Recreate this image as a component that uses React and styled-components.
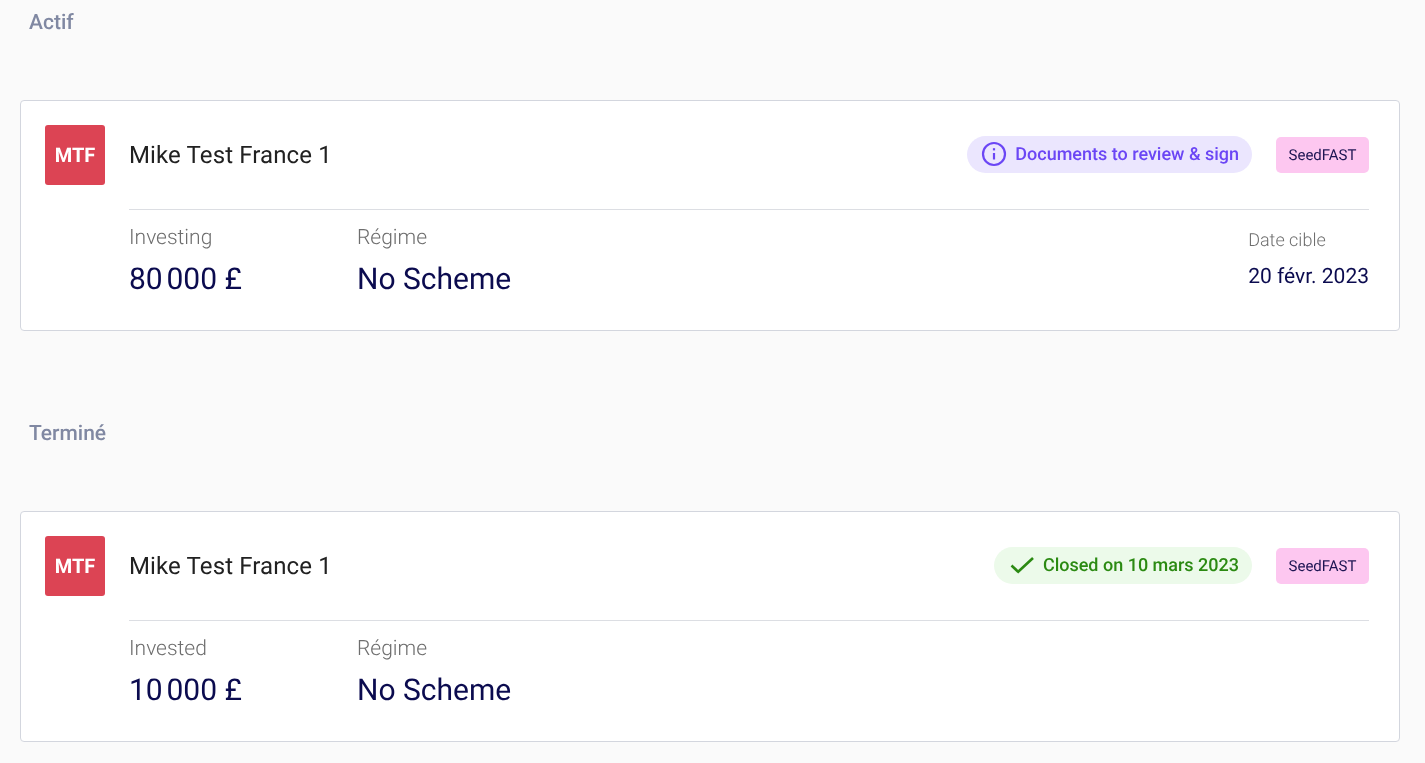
import React from 'react';
import styled, {createGlobalStyle} from 'styled-components';

const GlobalStyle = createGlobalStyle`
  html, body {
    margin: 0;
    padding: 0;
    background: #fafafa;
    font-family: Roboto, "Liberation Sans", sans-serif;
    text-rendering: geometricPrecision;
  }
`;

const Page = styled.div`
  padding: 0 25px 0 20px;
  display: flex;
  flex-direction: column;
  will-change: opacity;
`;

const SectionTitle = styled.h2`
  margin: 0 0 ${props => props.$gap}px 9px;
  padding-top: ${props => props.$top}px;
  font-size: 21px;
  line-height: 24px;
  font-weight: 500;
  color: #8088a2;
`;

const Card = styled.div`
  box-sizing: border-box;
  height: 231px;
  padding: 24px 30px 0 24px;
  background: #fff;
  border: 1px solid #d3d6de;
  border-radius: 4px;
  display: flex;
  gap: 24px;
`;

const Logo = styled.div`
  width: 60px;
  height: 60px;
  flex: none;
  background: #dc4454;
  border-radius: 3px;
  color: #fff;
  font-size: 20px;
  font-weight: 700;
  display: flex;
  align-items: center;
  justify-content: center;
`;

const Body = styled.div`
  flex: 1;
  min-width: 0;
`;

const Header = styled.div`
  height: 60px;
  padding-bottom: 24px;
  border-bottom: 1px solid #dcdee3;
  display: flex;
  align-items: center;
`;

const Name = styled.div`
  flex: 1;
  font-size: 24px;
  letter-spacing: 0.12px;
  color: #212121;
`;

const Status = styled.div`
  height: 37px;
  margin-top: -1px;
  box-sizing: border-box;
  padding: 0 13px 1px ${props => props.$pad}px;
  border-radius: 19px;
  background: ${props => props.$bg};
  color: ${props => props.$color};
  font-size: 18px;
  font-weight: 500;
  display: flex;
  align-items: center;
  gap: ${props => props.$gap}px;

  svg {
    flex: none;
  }
`;

const Chip = styled.div`
  margin-left: 24px;
  height: 36px;
  width: 93px;
  border-radius: 5px;
  background: #fdc7f0;
  color: #1c1452;
  font-size: 15px;
  display: flex;
  align-items: center;
  justify-content: center;
`;

const Stats = styled.div`
  padding-top: 13px;
  display: flex;
`;

const Stat = styled.div`
  width: 228px;
`;

const Label = styled.div`
  font-size: 21px;
  line-height: 30px;
  font-weight: 300;
  color: #6e6e6e;
`;

const Value = styled.div`
  margin-top: 9px;
  font-size: 30px;
  line-height: 36px;
  font-weight: 400;
  color: #0b0b4f;
`;

const Target = styled.div`
  margin-left: auto;
  padding-top: 5px;
`;

const TargetLabel = styled.div`
  font-size: 18px;
  line-height: 26px;
  font-weight: 300;
  color: #6e6e6e;
`;

const TargetValue = styled.div`
  margin-top: 10px;
  font-size: 21px;
  line-height: 26px;
  color: #0b0b4f;
`;

const InfoIcon = () => (
  <svg width="26" height="26" viewBox="0 0 26 26" fill="none" stroke="#6b46f5" strokeWidth="2.2">
    <circle cx="13" cy="13" r="11" />
    <path d="M13 12v6.5" />
    <path d="M13 7.2v2.2" />
  </svg>
);

const CheckIcon = () => (
  <svg width="24" height="18" viewBox="0 0 24 18" fill="none" stroke="#2b8a12" strokeWidth="2.6">
    <path d="M1.5 9.5L8.2 15.8L23 2" />
  </svg>
);

function Deal({status, stats, target}){
  return (
    <Card>
      <Logo>MTF</Logo>
      <Body>
        <Header>
          <Name>Mike Test France 1</Name>
          {status}
          <Chip>SeedFAST</Chip>
        </Header>
        <Stats>
          {stats.map(s => (
            <Stat key={s.label}>
              <Label>{s.label}</Label>
              <Value>{s.value}</Value>
            </Stat>
          ))}
          {target && (
            <Target>
              <TargetLabel>Date cible</TargetLabel>
              <TargetValue>{target}</TargetValue>
            </Target>
          )}
        </Stats>
      </Body>
    </Card>
  );
}

export default function App(){
  return (
    <Page>
      <GlobalStyle />
      <SectionTitle $top={11} $gap={65}>Actif</SectionTitle>
      <Deal
        status={
          <Status $bg="#ebe6fe" $color="#6b46f5" $pad={14} $gap={8}>
            <InfoIcon />
            Documents to review &amp; sign
          </Status>
        }
        stats={[
          {label: 'Investing', value: '80\u202f000 £'},
          {label: 'Régime', value: 'No Scheme'},
        ]}
        target="20 févr. 2023"
      />
      <SectionTitle $top={91} $gap={65}>Terminé</SectionTitle>
      <Deal
        status={
          <Status $bg="#ecfaea" $color="#2b8a12" $pad={16} $gap={9}>
            <CheckIcon />
            Closed on 10 mars 2023
          </Status>
        }
        stats={[
          {label: 'Invested', value: '10\u202f000 £'},
          {label: 'Régime', value: 'No Scheme'},
        ]}
      />
    </Page>
  );
}
